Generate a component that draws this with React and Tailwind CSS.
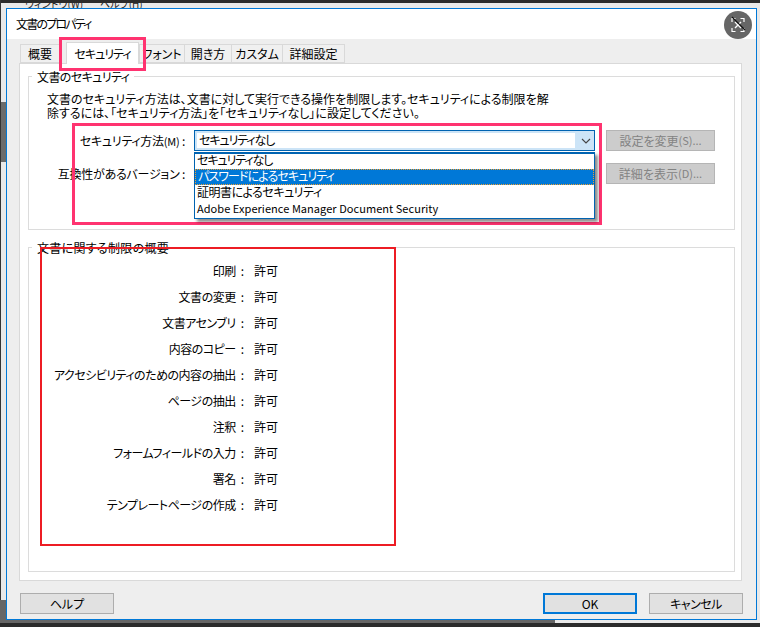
const rows = [
  "印刷",
  "文書の変更",
  "文書アセンブリ",
  "内容のコピー",
  "アクセシビリティのための内容の抽出",
  "ページの抽出",
  "注釈",
  "フォームフィールドの入力",
  "署名",
  "テンプレートページの作成",
];

const tabs = [
  { label: "概要", w: "w-[40px]" },
  { label: "セキュリティ", w: "w-[73px] ml-[6px] tracking-[-1px]", active: true },
  { label: "フォント", w: "w-[46px]" },
  { label: "開き方", w: "w-[48px]" },
  { label: "カスタム", w: "w-[52px]" },
  { label: "詳細設定", w: "w-[63px]" },
];

function Tab({ label, w, active }) {
  if (active) {
    return (
      <div className={`${w} h-[22px] -mb-px mr-px z-10 bg-white border border-b-0 border-[#d9d9d9] flex items-center justify-center whitespace-nowrap`}>
        {label}
      </div>
    );
  }
  return (
    <div className={`${w} h-[19px] -ml-px bg-[#f0f0f0] border border-[#d9d9d9] flex items-center justify-center whitespace-nowrap`}>
      {label}
    </div>
  );
}

function Group({ title, titleClass = "", className, children }) {
  return (
    <div className={`relative border border-[#dcdcdc] ${className}`}>
      <div className={`absolute -top-[8px] left-[3px] bg-white px-[5px] h-[16px] leading-[16px] ${titleClass}`}>{title}</div>
      {children}
    </div>
  );
}

function Button({ children, className = "border border-[#adadad]" }) {
  return (
    <div className={`w-[94px] h-[21px] bg-[#e1e1e1] flex items-center justify-center ${className}`}>
      {children}
    </div>
  );
}

function DisabledButton({ children }) {
  return (
    <div className="w-[109px] h-[21px] bg-[#cccccc] border border-[#b5b5b5] text-[#838383] flex items-center justify-center">
      {children}
    </div>
  );
}

function Dropdown() {
  return (
    <div className="absolute left-[165px] top-[75px] w-[401px] h-[67px] z-20 bg-white border border-t-2 border-[#0063b1] shadow-[3px_3px_3px_rgba(0,0,0,0.45)] leading-[12px]">
      <div className="h-[15px] pl-[2px] tracking-[-1.1px]">セキュリティなし</div>
      <div className="h-[16px] pl-[2px] bg-[#0078d7] text-white border border-dotted border-[#f0a030] tracking-[-0.9px]">パスワードによるセキュリティ</div>
      <div className="h-[16px] pl-[2px] pt-px tracking-[-0.5px]">証明書によるセキュリティ</div>
      <div className="h-[15px] pl-[2px] pt-px text-[11px] tracking-[0.05px]">Adobe Experience Manager Document Security</div>
    </div>
  );
}

function CaptureIcon() {
  return (
    <svg width="28" height="28" viewBox="0 0 28 28" fill="none" className="absolute left-[724px] top-[11px] z-30 rounded-full bg-[#666666]">
      <path d="M8 11V7.5H11.5M16.5 7.5H20V11M20 17V20.5H16.5M11.5 20.5H8V17" stroke="#fff" strokeWidth="1.2" />
      <path d="M11 11L17 17M17 11L11 17" stroke="#fff" strokeWidth="1.4" />
      <path d="M8 6L21 19" stroke="#111" strokeWidth="1.1" />
    </svg>
  );
}

export default function App() {
  return (
    <div className="relative w-[760px] h-[627px] overflow-hidden bg-[#e9e9e9] text-[12px] text-black [font-feature-settings:'palt'] font-['Noto_Sans_CJK_JP','Noto_Sans',sans-serif]">
      {/* stuff behind the dialog */}
      <div className="absolute left-[25px] -top-[3px] text-[10px] leading-[14px] text-[#222] flex">
        <span className="w-[75px]">ウィンドウ(W)</span>
        <span>ヘルプ(H)</span>
      </div>
      <div className="absolute inset-x-0 top-0 h-[3px] bg-[#2b2b2b]" />
      <div className="absolute left-0 top-[102px] w-[6px] h-[60px] bg-[#6b6b6b]" />
      <div className="absolute left-0 top-0 bottom-0 w-px bg-[#333]" />
      <div className="absolute left-0 top-[600px] w-[555px] h-[24px] bg-[#666666]" />
      <div className="absolute inset-x-0 bottom-0 h-[4px] bg-[#2b2b2b]" />

      <CaptureIcon />

      {/* red marks drawn on the screenshot */}
      <div className="absolute left-[59px] top-[37px] w-[87px] h-[34px] z-20 border-[3px] border-[#ff3370]" />
      <div className="absolute left-[72px] top-[123px] w-[530px] h-[102px] z-10 border-[3px] border-[#ff3370]" />
      <div className="absolute left-[40px] top-[247px] w-[356px] h-[299px] z-20 border-2 border-[#ed1c24]" />

      <div className="relative pt-[8px] pl-[6px]">
        <div className="w-[751px] h-[612px] border border-[#0078d7] flex flex-col bg-[#eeeeee]">
          <div className="h-[30px] bg-white flex items-center pl-[9px] pb-px tracking-[-1.8px]">文書のプロパティ</div>

          <div className="flex-1 flex flex-col pl-[12px] pr-[14px]">
            <div className="h-[24px] flex items-end pl-[2px]">
              {tabs.map((t) => (
                <Tab key={t.label} {...t} />
              ))}
            </div>

            <div className="h-[518px] bg-white border border-[#d9d9d9] pt-[12px] pl-[8px] pr-[6px] pb-[8px] flex flex-col">
              <Group title="文書のセキュリティ" titleClass="tracking-[-0.6px]" className="h-[154px] shrink-0">
                <div className="pl-[18px] pt-[15px] leading-[14px] whitespace-nowrap">
                  <p>文書のセキュリティ方法は、文書に対して実行できる操作を制限します。セキュリティによる制限を解</p>
                  <p>除するには、「セキュリティ方法」を「セキュリティなし」に設定してください。</p>
                </div>
                <div className="absolute left-0 right-0 top-[53px] flex flex-col gap-[12px]">
                  <div className="flex items-center h-[21px]">
                    <div className="w-[156px] text-right tracking-[-0.25px]">
                      セキュリティ方法<span className="text-[11px]">(M)</span> :
                    </div>
                    <div className="ml-[9px] w-[401px] h-[21px] border border-[#0063b1] bg-[#cce4f7] flex">
                      <div className="flex-1 bg-white pl-[2px] leading-[13px] m-[2px] tracking-[-1.1px]">セキュリティなし</div>
                      <div className="w-[17px] flex items-center justify-center">
                        <svg width="10" height="6" viewBox="0 0 10 6" fill="none">
                          <path d="M1 1L5 5L9 1" stroke="#444" strokeWidth="1.1" />
                        </svg>
                      </div>
                    </div>
                    <div className="ml-[11px]">
                      <DisabledButton>
                        設定を変更<span className="text-[11px]">(S)...</span>
                      </DisabledButton>
                    </div>
                  </div>
                  <div className="flex items-center h-[21px]">
                    <div className="w-[156px] text-right tracking-[-0.25px]">互換性があるバージョン :</div>
                    <div className="ml-[9px] w-[401px]" />
                    <div className="ml-[11px]">
                      <DisabledButton>
                        詳細を表示<span className="text-[11px]">(D)...</span>
                      </DisabledButton>
                    </div>
                  </div>
                </div>
                <Dropdown />
              </Group>

              <Group title="文書に関する制限の概要" titleClass="tracking-[0.3px]" className="mt-[17px] flex-1">
                <div className="pt-[10px]">
                  {rows.map((r) => (
                    <div key={r} className="h-[26px] flex items-center">
                      <div className="w-[215px] text-right">
                        <span className="tracking-[-0.5px]">{r}</span>
                        <span className="ml-[5px]">:</span>
                      </div>
                      <div className="ml-[10px]">許可</div>
                    </div>
                  ))}
                </div>
              </Group>
            </div>

            <div className="mt-[12px] flex justify-between -mr-px ml-px">
              <Button>ヘルプ</Button>
              <div className="flex gap-[12px]">
                <Button className="border-2 border-[#0078d7]">OK</Button>
                <Button className="border border-[#adadad] tracking-[-0.5px]">キャンセル</Button>
              </div>
            </div>
          </div>
        </div>
      </div>
    </div>
  );
}
